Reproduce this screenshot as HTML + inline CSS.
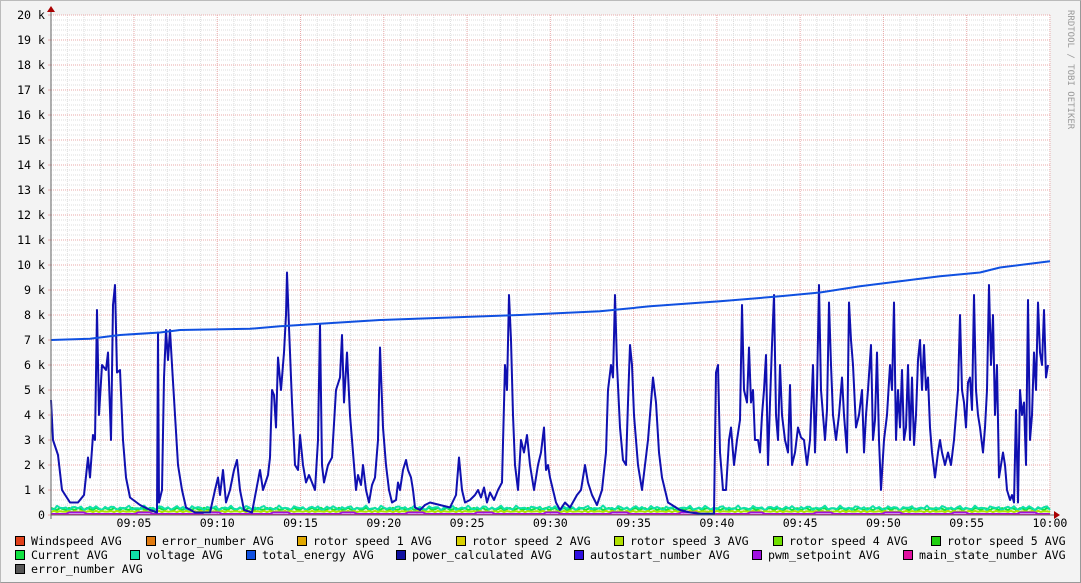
<!DOCTYPE html>
<html><head><meta charset="utf-8"><style>
html,body{margin:0;padding:0;}
body{width:1081px;height:583px;background:#f3f3f3;position:relative;overflow:hidden;font-family:"DejaVu Sans Mono","Liberation Mono",monospace;font-size:11.6px;color:#000;}
#frame{position:absolute;left:0;top:0;width:1079px;height:581px;border:1px solid #bbb;border-right-color:#999;border-bottom-color:#999;}
.lg{position:absolute;white-space:pre;line-height:12px;}
.lg i{display:inline-block;width:8px;height:8px;border:1px solid #000;margin-right:6px;vertical-align:-1px;}
svg{position:absolute;left:0;top:0;}
</style></head><body>
<div id="frame"></div>
<svg width="1081" height="583" xmlns="http://www.w3.org/2000/svg" id="g">
<rect x="51" y="15" width="999" height="500" fill="#fff"/>
<g id="grid"></g>
<g font-family="DejaVu Sans Mono, Liberation Mono, monospace" font-size="11.6" fill="#000" text-anchor="end" id="ylab"></g>
<g font-family="DejaVu Sans Mono, Liberation Mono, monospace" font-size="11.6" fill="#000" text-anchor="middle" id="xlab"></g>
<text x="1068" y="10" transform="rotate(90 1068 10)" font-family="DejaVu Sans Mono, monospace" font-size="9" fill="#999">RRDTOOL / TOBI OETIKER</text>
<g id="data" fill="none" stroke-width="2" stroke-linejoin="round"></g>
<line x1="51" y1="515" x2="1054" y2="515" stroke="#666"/>
<line x1="51" y1="11" x2="51" y2="519" stroke="#666"/>
<path d="M47,12 L51,6 L55,12 Z" fill="#a00"/>
<path d="M1054,511 L1060,515 L1054,519 Z" fill="#a00"/>
</svg>
<div class="lg" style="left:15px;top:535px"><i style="background:#e0401a"></i>Windspeed AVG</div>
<div class="lg" style="left:146px;top:535px"><i style="background:#e07a10"></i>error_number AVG</div>
<div class="lg" style="left:297px;top:535px"><i style="background:#e0a800"></i>rotor speed 1 AVG</div>
<div class="lg" style="left:456px;top:535px"><i style="background:#d8d000"></i>rotor speed 2 AVG</div>
<div class="lg" style="left:614px;top:535px"><i style="background:#b0e000"></i>rotor speed 3 AVG</div>
<div class="lg" style="left:773px;top:535px"><i style="background:#70e000"></i>rotor speed 4 AVG</div>
<div class="lg" style="left:931px;top:535px"><i style="background:#20d010"></i>rotor speed 5 AVG</div>
<div class="lg" style="left:15px;top:549px"><i style="background:#10e040"></i>Current AVG</div>
<div class="lg" style="left:130px;top:549px"><i style="background:#10e0a8"></i>voltage AVG</div>
<div class="lg" style="left:246px;top:549px"><i style="background:#1050e0"></i>total_energy AVG</div>
<div class="lg" style="left:396px;top:549px"><i style="background:#1010a0"></i>power_calculated AVG</div>
<div class="lg" style="left:574px;top:549px"><i style="background:#3010e0"></i>autostart_number AVG</div>
<div class="lg" style="left:752px;top:549px"><i style="background:#a010e0"></i>pwm_setpoint AVG</div>
<div class="lg" style="left:903px;top:549px"><i style="background:#e010a0"></i>main_state_number AVG</div>
<div class="lg" style="left:15px;top:563px"><i style="background:#555"></i>error_number AVG</div>
<script>
var NS="http://www.w3.org/2000/svg";
function el(p,t,a,txt){var e=document.createElementNS(NS,t);for(var k in a)e.setAttribute(k,a[k]);if(txt!=null)e.textContent=txt;p.appendChild(e);return e;}
var grid=document.getElementById('grid');
for(var i=0;i<=100;i++){var y=515-i*5;if(i%5==0)continue;el(grid,'line',{x1:51,x2:1050,y1:y,y2:y,stroke:'#ddd','stroke-dasharray':'1,1'});}
var step=916/11/5;
for(var j=1;j<=60;j++){var x=50.7+j*step;if(j%5==0)continue;el(grid,'line',{x1:x,x2:x,y1:15,y2:515,stroke:'#ddd','stroke-dasharray':'1,1'});}
for(var i=1;i<=20;i++){var y=515-i*25;el(grid,'line',{x1:51,x2:1050,y1:y,y2:y,stroke:'#e8a8a8','stroke-dasharray':'1,1'});}
for(var j=5;j<=60;j+=5){var x=50.7+j*step;el(grid,'line',{x1:x,x2:x,y1:15,y2:515,stroke:'#e8a8a8','stroke-dasharray':'1,1'});}
var yl=document.getElementById('ylab');
for(var i=0;i<=20;i++){el(yl,'text',{x:45,y:519-i*25},i==0?'0':i+' k');}
var xl=document.getElementById('xlab');
for(var j=1;j<=12;j++){var m=j*5;var s=m==60?'10:00':'09:'+(m<10?'0'+m:m);el(xl,'text',{x:50.7+j*5*step,y:527},s);}
// ticks
for(var i=0;i<=20;i++)el(grid,'line',{x1:48,x2:51,y1:515-i*25,y2:515-i*25,stroke:'#e8a8a8'});
var P=[51,4.6,53,3,58,2.4,62,1,70,0.5,78,0.5,84,0.8,88,2.3,90,1.5,93,3.2,95,3,97,8.2,99,4,102,6,106,5.8,108,6.5,111,3,113,8.4,115,9.2,117,5.7,120,5.8,123,3,126,1.5,130,0.7,140,0.4,150,0.2,157,0.1,158,7.3,159,0.5,162,1,164,5.5,166,7.4,168,6.2,170,7.4,172,6,175,4,178,2,182,1,186,0.3,195,0.1,210,0.1,215,1,218,1.5,220,0.8,223,1.8,226,0.5,230,1,234,1.8,237,2.2,240,1,244,0.2,252,0.1,260,1.8,263,1,268,1.6,270,2.3,272,5,274,4.8,276,3.5,278,6.3,281,5,284,6.5,286,8,287,9.7,289,7.5,292,4.5,295,2,298,1.8,300,3.2,303,2,306,1.3,309,1.6,312,1.3,315,1,318,3,320,7.6,322,2,324,1.3,328,2,332,2.3,336,5,340,5.5,342,7.2,344,4.5,347,6.5,350,4,353,2.5,356,1,358,1.6,361,1.2,363,2,366,1,369,0.5,372,1.2,375,1.5,378,3,380,6.7,383,3.5,386,2,389,1,392,0.5,396,0.6,398,1.3,400,1,403,1.8,406,2.2,408,1.8,411,1.5,413,1,415,0.3,420,0.2,425,0.4,430,0.5,440,0.4,450,0.3,456,0.8,459,2.3,462,1,465,0.5,470,0.6,475,0.8,478,1,481,0.7,484,1.1,487,0.5,490,0.9,494,0.6,498,1,502,1.3,505,6,507,5,509,8.8,511,7,513,4,515,2,518,1,521,3,524,2.5,527,3.2,530,2,534,1,538,2,541,2.5,544,3.5,546,1.8,548,2,550,1.5,553,1,556,0.5,560,0.2,565,0.5,570,0.3,577,0.8,581,1,585,2,588,1.3,592,0.8,597,0.4,602,1,606,2.5,608,5,611,6,613,5.5,615,8.8,617,6,620,3.5,623,2.2,626,2,628,4.5,630,6.8,632,6,634,4,638,2,642,1,645,2,648,3,650,4,653,5.5,656,4.5,659,2.5,662,1.5,665,1,668,0.5,672,0.4,676,0.3,680,0.2,690,0.1,700,0.05,714,0.05,716,5.7,718,6,720,2.5,723,1,726,1,729,3,731,3.5,734,2,737,3,740,3.8,742,8.4,744,5,747,4.5,749,6.7,751,4.5,753,5,755,3,758,3,760,2.5,762,4,764,5,766,6.4,768,2,770,4.5,772,6.8,774,8.8,776,4,778,3,780,6,782,4,785,3,788,2.5,790,5.2,792,2,795,2.5,798,3.5,801,3.1,804,3,807,2,810,3,813,6,815,2.5,817,5,819,9.2,821,5,823,4,825,3,827,4.2,829,8.5,831,6,833,4,836,3,839,4,842,5.5,844,4,847,2.5,849,8.5,851,7,853,6,856,3.5,859,4,862,5,864,2.5,866,4,868,5,871,6.8,873,3,875,3.8,877,6.5,879,3,881,1,884,3,887,4,890,6,892,5,894,8.5,896,3,898,5,900,3.5,902,5.8,904,3,906,3.5,908,6,910,3,912,5.5,914,2.8,916,4,918,6.2,920,7,922,5,924,6.8,926,5,928,5.5,930,3.5,932,2.5,935,1.5,938,2.5,940,3,942,2.5,945,2,948,2.5,951,2,954,3,956,4,958,5,960,8,962,5,964,4.5,966,3.5,968,5.3,970,5.5,972,4.2,974,8.8,976,5,978,4,980,3.5,983,2.5,985,3.5,987,5,989,9.2,991,6,993,8,995,4,997,6,999,1.5,1001,2,1003,2.5,1005,2,1007,1,1010,0.6,1012,0.8,1014,0.5,1016,4.2,1018,0.5,1020,5,1022,4,1024,4.5,1026,2,1028,8.6,1030,3,1032,4,1034,6.5,1036,5,1038,8.5,1040,6.5,1042,6,1044,8.2,1046,5.5,1048,6];
var d=document.getElementById('data');
function pts(f){var s=[];for(var x=51;x<=1050;x+=3)s.push(x+','+f(x).toFixed(1));return s.join(' ');}
el(d,'polyline',{points:pts(function(x){return 509+Math.sin(x*0.7)*1.2;}),stroke:'#10e040'});
el(d,'polyline',{points:pts(function(x){return 508+Math.sin(x*1.3)*1.5+Math.cos(x*0.37)*1;}),stroke:'#10e0a8'});
el(d,'polyline',{points:pts(function(x){return 511.5+Math.sin(x*0.9)*0.6;}),stroke:'#b0e000'});
el(d,'polyline',{points:pts(function(x){return 514+((Math.floor(x/17)%4==0)?-1.5:0);}),stroke:'#a010e0'});
el(d,'polyline',{points:pts(function(x){return 514.5;}),stroke:'#e010a0','stroke-width':1});
var s=[];for(var i=0;i<P.length;i+=2)s.push(P[i]+','+(515-25*P[i+1]).toFixed(1));
el(d,'polyline',{points:s.join(' '),stroke:'#1010b0'});
var T=[51,7,90,7.05,120,7.2,160,7.3,180,7.4,250,7.45,280,7.55,320,7.65,380,7.8,450,7.9,520,8,600,8.15,650,8.35,720,8.55,780,8.75,820,8.9,860,9.15,900,9.35,940,9.55,980,9.7,1000,9.9,1050,10.15];
var t=[];for(var i=0;i<T.length;i+=2)t.push(T[i]+','+(515-25*T[i+1]).toFixed(1));
el(d,'polyline',{points:t.join(' '),stroke:'#1050e0'});
</script>
</body></html>
